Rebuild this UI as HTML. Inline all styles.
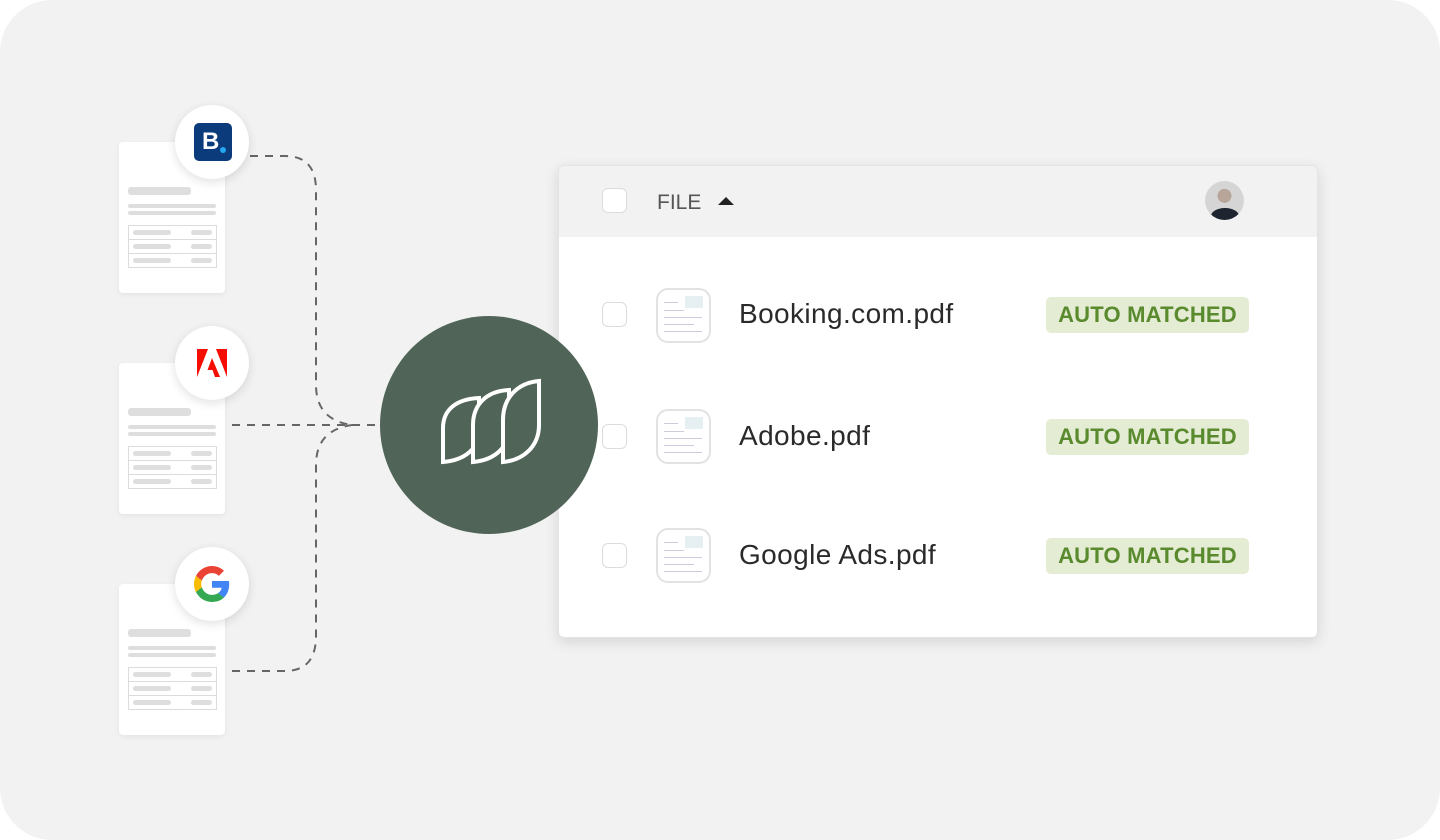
<!DOCTYPE html>
<html><head><meta charset="utf-8"><style>
html,body{margin:0;padding:0;background:#fff;}
body{width:1440px;height:840px;position:relative;overflow:hidden;font-family:"Liberation Sans",sans-serif;}
.bg{position:absolute;left:0;top:0;width:1440px;height:840px;background:#f2f2f2;border-radius:52px;}
.doc{position:absolute;left:119px;width:106px;height:151px;background:#fff;border-radius:4px;box-shadow:0 2px 6px rgba(0,0,0,.06);}
.bar{position:absolute;background:#dedede;border-radius:3px;}
.tbl{position:absolute;left:9px;top:83px;width:87px;height:41px;border:1px solid #dcdcdc;}
.tbl div{height:13px;border-bottom:1px solid #dcdcdc;position:relative;}
.tbl div:last-child{border-bottom:none}
.tbl div:before{content:"";position:absolute;left:4px;top:4px;width:38px;height:5px;background:#dedede;border-radius:3px}
.tbl div:after{content:"";position:absolute;right:4px;top:4px;width:21px;height:5px;background:#dedede;border-radius:3px}
.badge{position:absolute;width:74px;height:74px;border-radius:50%;background:#fff;box-shadow:0 3px 10px rgba(0,0,0,.12);}
.panel{position:absolute;left:558px;top:165px;width:760px;height:473px;background:#fff;border-radius:6px;box-shadow:0 4px 14px rgba(0,0,0,.12);overflow:hidden;border:1px solid #e4e4e4;box-sizing:border-box}
.head{height:71px;background:#f2f2f2;position:relative}
.cb{position:absolute;width:25px;height:25px;border:1.5px solid #dcdcdc;border-radius:6px;background:#fff;box-sizing:border-box}
.row{position:absolute;left:0;width:760px;height:60px}
.thumb{position:absolute;left:97px;width:55px;height:55px;border:2px solid #e2e2e2;border-radius:12px;box-sizing:border-box;background:#fff;overflow:hidden}
.thumb i{position:absolute;background:#ccd;height:1px}
.thumb b{position:absolute;right:6px;top:6px;width:18px;height:12px;background:#e6f0f2}
.name{position:absolute;left:180px;font-size:28px;color:#2a2a2a;letter-spacing:0.4px}
.tag{position:absolute;left:487px;width:203px;height:36px;background:#e5ecd4;border-radius:5px;color:#5a8a2e;font-size:22px;font-weight:bold;text-align:center;line-height:36px;letter-spacing:0.2px}
</style></head><body>
<div class="bg"></div>

<svg style="position:absolute;left:0;top:0" width="1440" height="840">
<g fill="none" stroke="#666" stroke-width="2" stroke-dasharray="8 7">
<path d="M250 156 H285 Q316 156 316 190 V385 Q316 420 352 425"/>
<path d="M232 425 H380"/>
<path d="M232 671 H285 Q316 671 316 636 V465 Q316 430 352 425"/>
</g>
</svg>

<div class="doc" style="top:142px"><div class="bar" style="left:9px;top:45px;width:63px;height:8px"></div><div class="bar" style="left:9px;top:62px;width:88px;height:4px"></div><div class="bar" style="left:9px;top:69px;width:88px;height:4px"></div><div class="tbl"><div></div><div></div><div></div></div></div>
<div class="doc" style="top:363px"><div class="bar" style="left:9px;top:45px;width:63px;height:8px"></div><div class="bar" style="left:9px;top:62px;width:88px;height:4px"></div><div class="bar" style="left:9px;top:69px;width:88px;height:4px"></div><div class="tbl"><div></div><div></div><div></div></div></div>
<div class="doc" style="top:584px"><div class="bar" style="left:9px;top:45px;width:63px;height:8px"></div><div class="bar" style="left:9px;top:62px;width:88px;height:4px"></div><div class="bar" style="left:9px;top:69px;width:88px;height:4px"></div><div class="tbl"><div></div><div></div><div></div></div></div>

<div class="badge" style="left:175px;top:105px">
<div style="position:absolute;left:19px;top:18px;width:38px;height:38px;background:#0c3b7c;border-radius:5px;color:#fff;font-weight:bold;font-size:24px;line-height:38px;text-indent:8px">B<span style="position:absolute;left:26px;top:24px;width:6px;height:6px;border-radius:50%;background:#23a8f0"></span></div></div>
<div class="badge" style="left:175px;top:326px">
<svg style="position:absolute;left:22px;top:22px" width="30" height="30" viewBox="0 0 30 30"><path d="M0 1H11L0 29Z M19 1H30V29Z M15 10L23 29H18L15.5 22H10.5Z" fill="#f40f02"/></svg></div>
<div class="badge" style="left:175px;top:547px">
<svg style="position:absolute;left:19px;top:19px" width="36" height="36" viewBox="0 0 48 48"><path fill="#EA4335" d="M24 9.5c3.5 0 6.6 1.2 9.1 3.6l6.8-6.8C35.8 2.4 30.4 0 24 0 14.6 0 6.6 5.4 2.6 13.3l7.9 6.2C12.4 13.7 17.7 9.5 24 9.5z"/><path fill="#4285F4" d="M46.9 24.5c0-1.6-.1-3.1-.4-4.5H24v9h12.9c-.6 3-2.3 5.5-4.8 7.2l7.7 6c4.5-4.2 7.1-10.4 7.1-17.7z"/><path fill="#FBBC05" d="M10.5 28.6c-.5-1.4-.8-3-.8-4.6s.3-3.2.8-4.6l-7.9-6.2C.9 16.5 0 20.1 0 24s.9 7.5 2.6 10.8l7.9-6.2z"/><path fill="#34A853" d="M24 48c6.5 0 11.9-2.1 15.9-5.8l-7.7-6c-2.2 1.5-4.9 2.3-8.2 2.3-6.3 0-11.6-4.2-13.5-10l-7.9 6.2C6.6 42.6 14.6 48 24 48z"/></svg></div>

<div class="panel">
<div class="head">
<div class="cb" style="left:43px;top:22px"></div>
<div style="position:absolute;left:98px;top:25px;font-size:21px;color:#555">FILE</div>
<div style="position:absolute;left:159px;top:31px;width:0;height:0;border-left:8px solid transparent;border-right:8px solid transparent;border-bottom:8px solid #222"></div>
<div style="position:absolute;left:646px;top:15px;width:39px;height:39px;border-radius:50%;background:radial-gradient(circle at 50% 38%,#b8a59a 0 22%,#d5d5d5 23%);overflow:hidden"><div style="position:absolute;left:6px;top:27px;width:28px;height:16px;background:#1e2430;border-radius:50% 50% 0 0"></div></div>
</div>
<div class="row" style="top:119px"><div class="cb" style="left:43px;top:17px"></div><div class="thumb" style="top:3px"><b></b><i style="left:6px;top:12px;width:14px"></i><i style="left:6px;top:20px;width:20px"></i><i style="left:6px;top:27px;width:38px"></i><i style="left:6px;top:34px;width:30px"></i><i style="left:6px;top:41px;width:38px"></i></div><div class="name" style="top:13px">Booking.com.pdf</div><div class="tag" style="top:12px">AUTO MATCHED</div></div>
<div class="row" style="top:241px"><div class="cb" style="left:43px;top:17px"></div><div class="thumb" style="top:2px"><b></b><i style="left:6px;top:12px;width:14px"></i><i style="left:6px;top:20px;width:20px"></i><i style="left:6px;top:27px;width:38px"></i><i style="left:6px;top:34px;width:30px"></i><i style="left:6px;top:41px;width:38px"></i></div><div class="name" style="top:13px">Adobe.pdf</div><div class="tag" style="top:12px">AUTO MATCHED</div></div>
<div class="row" style="top:360px"><div class="cb" style="left:43px;top:17px"></div><div class="thumb" style="top:2px"><b></b><i style="left:6px;top:12px;width:14px"></i><i style="left:6px;top:20px;width:20px"></i><i style="left:6px;top:27px;width:38px"></i><i style="left:6px;top:34px;width:30px"></i><i style="left:6px;top:41px;width:38px"></i></div><div class="name" style="top:13px">Google Ads.pdf</div><div class="tag" style="top:12px">AUTO MATCHED</div></div>
</div>

<svg style="position:absolute;left:0;top:0;z-index:5" width="1440" height="840">
<circle cx="489" cy="425" r="109" fill="#506558"/>
<g fill="#506558" stroke="#fff" stroke-width="4" stroke-linejoin="miter">
<path d="M443 462 V428 C443 410 456 399 479 398 V430 C479 448 466 460 443 462Z"/>
<path d="M473 462 V425 C473 405 486 391 509 390 V428 C509 447 495 460 473 462Z"/>
<path d="M503 462 V420 C503 398 517 383 539 381 V425 C539 446 524 460 503 462Z"/>
</g>
</svg>
</body></html>
